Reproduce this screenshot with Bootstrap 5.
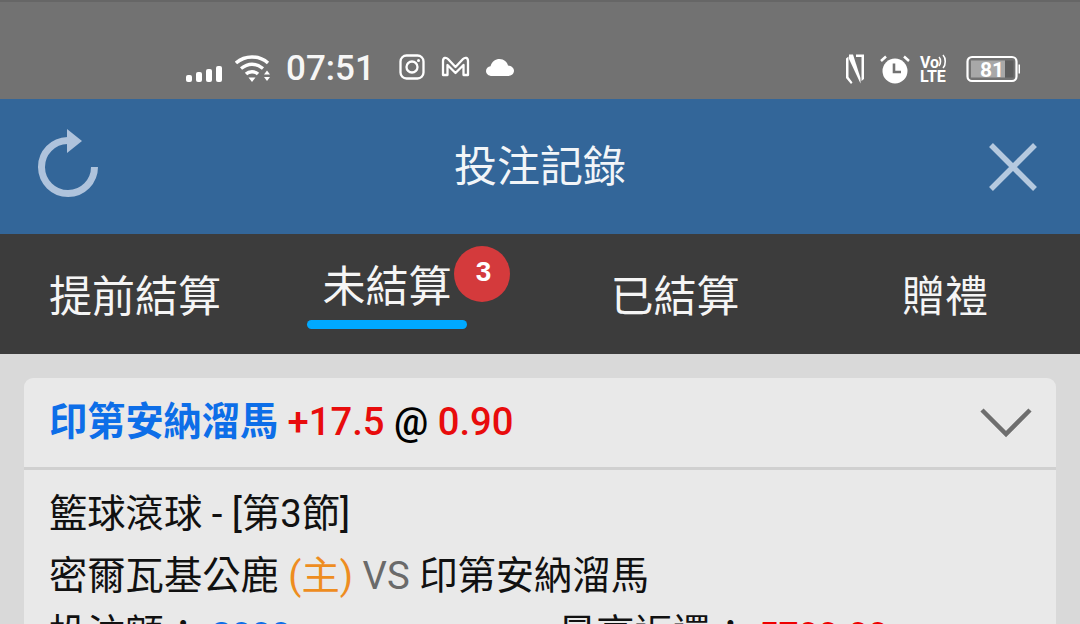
<!DOCTYPE html>
<html lang="zh-Hant">
<head>
<meta charset="utf-8">
<title>投注記錄</title>
<link href="https://cdn.jsdelivr.net/npm/bootstrap@5.3.0/dist/css/bootstrap.min.css" rel="stylesheet">
<style>
html,body{height:624px;overflow:hidden}
body{background:#d9d9d9;font-family:Roboto,"Noto Sans CJK TC",sans-serif;color:#111}
.phone-status{height:99px;background:#727272;border-top:2px solid #666;color:#fff;padding:36px 60px 0 186px;line-height:1}
.status-wifi{margin-left:13px}
.signal-bars{margin-top:10px}
.app-glyphs{margin-top:-3px}
.volte-icon{margin-left:10px;overflow:visible}
.battery-icon{margin-left:19px}
.status-time{font-family:Roboto,sans-serif;font-size:35px;font-weight:500;color:#f6f6f6;margin:0 24px 0 13px}
.app-head{height:135px;background:#336699;color:#fff}
.head-side{width:110px}
.refresh-side{padding-left:38px}
.close-side{padding-right:41px}
.app-title{font-size:43px;line-height:1;color:#f2f5f8;padding-top:2px}
.tab-bar{height:120px;background:#3c3c3c}
.tab-cell{width:270px;color:#f5f5f5;font-size:43px;line-height:1;padding-top:42px}
.tab-live{margin-right:36px;margin-top:-10px;padding:0 15.500px 11px;color:#f5f5f5;position:relative}
.tab-live::after{content:"";position:absolute;left:0;right:0;bottom:-9px;height:9px;border-radius:5px;background:#00a9ff}
.tab-count{position:absolute;left:147px;top:-20px;width:56px;height:56px;background:#d43a3c;color:#fff;font-size:28px;font-weight:700;font-family:"Liberation Sans",sans-serif;padding:0 0 5px 3px}
.bet-panel{margin:24px 24px 0;background:#e9e9e9;border-radius:9px 9px 0 0;overflow:hidden}
.bet-head{height:92px;border-bottom:3px solid #d0d0d0;padding:0 24px 0 25px;font-size:38.200px;line-height:1}
.team-blue{color:#0d6ee8;font-weight:700}
.odd-red{color:#e80c0c;font-weight:500}
.at-mark{color:#000;font-weight:500}
.bet-body{padding:13px 25px 0;font-size:38.300px;line-height:62px}
.stake-row{margin-top:-4px}
.home-tag{color:#ee8d1f}
.vs-tag{color:#6a6a6a}
.stake-blue,.pay-red{font-size:34.500px;font-weight:700}
.stake-blue{color:#0d6ee8}
.pay-red{color:#ee0000}
.stake-col{width:509px}
</style>
</head>
<body>
<div class="phone-status d-flex align-items-center justify-content-between">
  <div class="d-flex align-items-center">
    <svg width="36" height="16" viewBox="0 0 36 16" class="signal-bars"><g fill="#fff"><rect x="0" y="9" width="6" height="7" rx="2"/><rect x="10" y="6" width="6" height="10" rx="2"/><rect x="20" y="3" width="6" height="13" rx="2"/><rect x="30" y="0" width="6" height="16" rx="2"/></g></svg>
    <svg width="38" height="30" viewBox="0 0 38 30" class="status-wifi"><g fill="none" stroke="#fff" stroke-width="3.400"><path d="M1 9C10 1 24 1 33 9"/><path d="M6 14.500C13 9 21 9 28 14.500"/><path d="M11 20C14 17 20 17 23 20"/></g><path d="M13.500 23.500h7l-3.500 4.500zM29 20.500l3-4 3 4zM29 23h6l-3 4z" fill="#fff"/></svg>
    <span class="status-time">07:51</span>
    <svg width="26" height="26" viewBox="0 0 26 26" class="app-glyphs"><rect x="1.500" y="1.500" width="23" height="23" rx="6" fill="none" stroke="#fff" stroke-width="2.300"/><circle cx="13" cy="13" r="5.500" fill="none" stroke="#fff" stroke-width="2.300"/><circle cx="19.500" cy="6.500" r="1.500" fill="#fff"/></svg>
    <svg width="29" height="22" viewBox="0 0 29 22" class="ms-3 app-glyphs"><path d="M2 19V5C2 1.500 5 1 7 3l7.500 8L22 3c2-2 5-1.500 5 2v14h-4.500V9l-8 8-8-8v10z" fill="none" stroke="#fff" stroke-width="2.300" stroke-linejoin="round"/></svg>
    <svg width="28" height="18" viewBox="0 0 28 18" class="ms-3 app-glyphs"><path d="M6 18C2.500 18 0 15.800 0 13c0-2.500 2-4.500 4.500-4.800C6 3.500 9.500 1 13.500 1c4.500 0 7.800 3 8.500 6.500 3.500.3 6 2.500 6 5.300 0 3-2.500 5.200-6 5.200z" fill="#fff"/></svg>
  </div>
  <div class="d-flex align-items-center">
    <svg width="18" height="30" viewBox="0 0 18 30"><g fill="#fff"><path d="M0 4.500 2.500 2.500V23l4 5.500-1.500 1.500L0 24z"/><path d="M3 0.500H7L14.500 24V29.500L3 5z"/><path d="M10 0.500H18V25L15.500 27V3H10z"/></g></svg>
    <svg width="30" height="30" viewBox="0 0 30 30" class="ms-3"><circle cx="15" cy="17" r="12.500" fill="#fff"/><path d="M14 9.500v8.500h7" fill="none" stroke="#727272" stroke-width="2.600"/><path d="M1 7l5-4.500M29 7l-5-4.500" stroke="#fff" stroke-width="2.500"/></svg>
    <svg width="27" height="28" viewBox="0 0 27 28" class="volte-icon"><text x="0" y="12.500" font-family="Roboto,sans-serif" font-size="16" font-weight="700" fill="#fff">Vo</text><path d="M19 2c2 2 2 7 0 9M23 0c3 3 3 10 0 13" fill="none" stroke="#fff" stroke-width="1.600"/><text x="0" y="27" font-family="Roboto,sans-serif" font-size="16" font-weight="700" fill="#fff">LTE</text></svg>
    <svg width="54" height="28" viewBox="0 0 54 28" class="battery-icon"><rect x="1.500" y="2" width="49" height="24" rx="4.500" fill="none" stroke="#fff" stroke-width="2.200"/><rect x="5" y="5.500" width="34" height="17" fill="#a8a8a8"/><rect x="39" y="5.500" width="8.500" height="17" fill="#5d5d5d"/><rect x="52.500" y="9.500" width="1.500" height="9" fill="#fff"/><text x="14" y="21.500" font-family="Roboto,sans-serif" font-size="21" font-weight="700" fill="#fff">81</text></svg>
  </div>
</div>
<header class="app-head d-flex align-items-center justify-content-between">
  <div class="head-side refresh-side d-flex"><svg width="62" height="76" viewBox="0 0 62 76"><path d="M29.500 11.500A26.500 26.500 0 1 0 56.500 38" fill="none" stroke="#afc3dc" stroke-width="7"/><path d="M29 0l15 12-15 12z" fill="#afc3dc"/></svg></div>
  <div class="app-title">投注記錄</div>
  <div class="head-side close-side d-flex justify-content-end"><svg width="52" height="52" viewBox="0 0 52 52"><path d="M4 4l44 44M48 4L4 48" stroke="#b5c9df" stroke-width="5.500"/></svg></div>
</header>
<nav class="tab-bar d-flex">
  <div class="tab-cell d-flex justify-content-center">提前結算</div>
  <div class="tab-cell d-flex justify-content-center align-items-start">
    <div class="tab-live">未結算<span class="tab-count rounded-circle d-flex align-items-center justify-content-center">3</span></div>
  </div>
  <div class="tab-cell d-flex justify-content-center">已結算</div>
  <div class="tab-cell d-flex justify-content-center">贈禮</div>
</nav>
<section class="bet-panel">
  <div class="bet-head d-flex align-items-center justify-content-between">
    <div><span class="team-blue">印第安納溜馬</span> <span class="odd-red">+17.5</span> <span class="at-mark">@</span> <span class="odd-red">0.90</span></div>
    <svg width="52" height="32" viewBox="0 0 52 32"><path d="M2 3l24 24L50 3" fill="none" stroke="#6e6e6e" stroke-width="4.500"/></svg>
  </div>
  <div class="bet-body">
    <div>籃球滾球 - [第3節]</div>
    <div>密爾瓦基公鹿 <span class="home-tag">(主)</span> <span class="vs-tag">VS</span> 印第安納溜馬</div>
    <div class="d-flex stake-row"><div class="stake-col">投注額： <span class="stake-blue">3000</span></div><div>最高返還： <span class="pay-red">5700.00</span></div></div>
  </div>
</section>
<script src="https://cdn.jsdelivr.net/npm/bootstrap@5.3.0/dist/js/bootstrap.bundle.min.js"></script>
</body>
</html>
